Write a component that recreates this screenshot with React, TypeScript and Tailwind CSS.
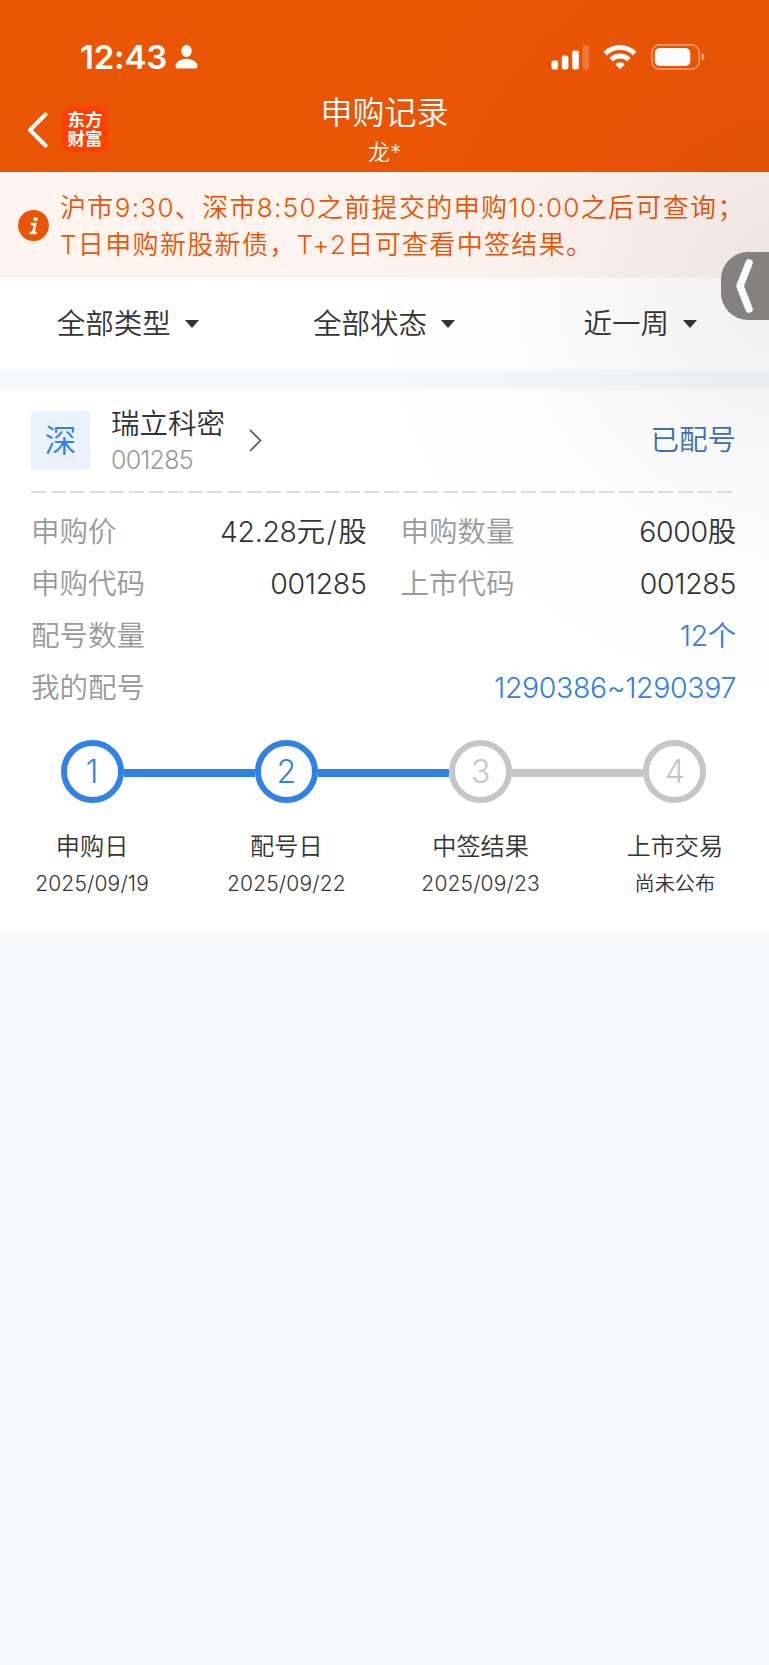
import type { ReactNode } from "react";
import clsx from "clsx";

const StatusBar = () => (
  <div className="flex h-[88px] items-center pt-[26px] pl-[80px] pr-[64px] text-white">
    <span className="text-[33px] font-semibold leading-none tracking-[-0.2px]">12:43</span>
    <svg className="ml-[8px]" width="23" height="24" viewBox="0 0 23 24" fill="currentColor">
      <ellipse cx="11.5" cy="6" rx="5.3" ry="5.9" />
      <path d="M0.5 21C0.5 17.5 5 13.7 11.5 13.7S22.5 17.5 22.5 21C22.5 22.8 21.8 23.5 20 23.5H3C1.2 23.5 0.5 22.8 0.5 21Z" />
    </svg>
    <svg className="ml-auto" width="39" height="25" viewBox="0 0 39 25" fill="currentColor">
      <rect x="0.5" y="15.5" width="6.6" height="9" rx="2" />
      <rect x="10.8" y="10.5" width="6.6" height="14" rx="2" />
      <rect x="21.2" y="5.5" width="6.6" height="19" rx="2" />
      <rect x="31.6" y="0.5" width="6.6" height="24" rx="2" opacity="0.22" />
    </svg>
    <svg className="ml-[13px]" width="34" height="25" viewBox="0 0 34 25" fill="none" stroke="currentColor">
      <path d="M2.2 8.6A21.2 21.2 0 0 1 31.8 8.6" strokeWidth="5" />
      <path d="M8 14.6A13 13 0 0 1 26 14.6" strokeWidth="4.8" />
      <path d="M12.2 19.2A7 7 0 0 1 21.8 19.2L17 24.3Z" fill="currentColor" stroke="none" />
    </svg>
    <svg className="ml-[14px]" width="54" height="26" viewBox="0 0 54 26" fill="none">
      <rect x="0.9" y="0.9" width="47.2" height="24.2" rx="7.5" stroke="white" strokeOpacity="0.42" strokeWidth="1.6" />
      <rect x="3.8" y="4" width="35.5" height="18" rx="5" fill="white" />
      <path d="M50.5 9C52.3 9.7 53.3 11.2 53.3 13S52.3 16.3 50.5 17Z" fill="white" fillOpacity="0.5" />
    </svg>
  </div>
);

const Header = () => (
  <header className="h-[172px] bg-[#ea5504]">
    <StatusBar />
    <div className="grid grid-cols-[1fr_auto_1fr] items-start text-white">
      <div className="flex items-center pl-[27px] pt-[18px]">
        <svg className="mt-[2px]" width="21" height="36" viewBox="0 0 21 36" fill="none" stroke="currentColor" strokeWidth="4">
          <path d="M18.5 2.5L3 18L18.5 33.5" strokeLinecap="round" strokeLinejoin="round" />
        </svg>
        <div className="ml-[14px] flex h-[46px] w-[46px] flex-col items-center justify-center rounded-[10px] bg-[#ff4002] text-[17.5px] font-bold leading-[19px]">
          <span>东方</span>
          <span>财富</span>
        </div>
      </div>
      <div className="flex flex-col items-center font-[350]">
        <h1 className="mt-[5px] text-[32px] leading-[40px]">申购记录</h1>
        <p className="mt-[4px] text-[22px] leading-[30px]">龙*</p>
      </div>
    </div>
  </header>
);

const Notice = () => (
  <div className="flex h-[106px] bg-[#fdf3ef] pl-[18px] text-[#ea5504]">
    <svg className="mt-[38px] shrink-0" width="31" height="31" viewBox="0 0 31 31">
      <circle cx="15.5" cy="15.5" r="15.4" fill="#ea5504" />
      <circle cx="17.6" cy="9.2" r="2.1" fill="white" />
      <path d="M12.8 14H17.2L15.4 22.6M11.6 22.9H18.6" fill="none" stroke="white" strokeWidth="2.5" />
    </svg>
    <p className="mt-[17px] ml-[11px] whitespace-nowrap text-[26px] font-[350] leading-[37px] tracking-[1.34px]">
      沪市9:30、深市8:50之前提交的申购10:00之后可查询；
      <br />
      T日申购新股新债，T+2日可查看中签结果。
    </p>
  </div>
);

const Filters = () => (
  <div className="grid h-[92px] grid-cols-3 bg-white">
    {["全部类型", "全部状态", "近一周"].map((label) => (
      <button key={label} className="flex items-center justify-center gap-[14px] pr-[1px] text-[28.5px] font-[350] text-[#333]">
        {label}
        <svg width="14" height="8" viewBox="0 0 14 8" fill="currentColor">
          <path d="M0 0H14L7 8Z" />
        </svg>
      </button>
    ))}
  </div>
);

const Field = ({ label, children, link }: { label: string; children: ReactNode; link?: boolean }) => (
  <div className="flex h-[52px] items-center justify-between text-[28.5px]">
    <span className="text-[#999]">{label}</span>
    <span className={clsx("tracking-[-0.35px]", link ? "text-[#2f80e8]" : "text-[#333]")}>{children}</span>
  </div>
);

const steps = [
  { name: "申购日", date: "2025/09/19", done: true },
  { name: "配号日", date: "2025/09/22", done: true },
  { name: "中签结果", date: "2025/09/23", done: false },
  { name: "上市交易", date: "尚未公布", done: false },
];

const lineColor = (index: number) => {
  if (index < 0 || index >= steps.length - 1) return "bg-transparent";
  return steps[index].done ? "bg-[#3282e6]" : "bg-[#c6c6c6]";
};

const Steps = () => (
  <div className="-mx-[36px] mt-[26px] grid grid-cols-4 font-[350] text-[#333]">
    {steps.map((step, i) => (
      <div key={step.name} className="flex flex-col items-center">
        <div className="flex w-full items-center">
          <div className={clsx("mt-[2px] h-[8px] flex-1", lineColor(i - 1))} />
          <div
            className={clsx(
              "flex h-[63px] w-[63px] items-center justify-center rounded-full border-[6px] text-[32px] font-light",
              step.done ? "border-[#3282e6] text-[#3282e6]" : "border-[#c6c6c6] text-[#c6c6c6]"
            )}
          >
            {i + 1}
          </div>
          <div className={clsx("mt-[2px] h-[8px] flex-1", lineColor(i))} />
        </div>
        <div className="mt-[26px] text-[24.2px] leading-[36px]">{step.name}</div>
        <div
          className={clsx(
            "mt-[4px] leading-[30px]",
            step.date.includes("/") ? "text-[21px] tracking-[0.15px]" : "text-[20.2px]"
          )}
        >
          {step.date}
        </div>
      </div>
    ))}
  </div>
);

const RecordCard = () => (
  <section className="mt-[20px] h-[541px] overflow-hidden bg-white pl-[31px] pr-[33px] pt-[15px]">
    <div className="flex h-[71px] items-center font-[350]">
      <div className="flex h-[59px] w-[59px] items-center justify-center rounded-[4px] bg-[#eaf2fd] text-[32px] text-[#2f80e8]">
        深
      </div>
      <div className="ml-[21px] pt-[2px]">
        <div className="text-[28.5px] leading-[38px] text-[#333]">瑞立科密</div>
        <div className="text-[25px] leading-[35px] tracking-[-0.7px] text-[#999]">001285</div>
      </div>
      <svg className="ml-[24px]" width="13" height="23" viewBox="0 0 13 23" fill="none" stroke="#555" strokeWidth="1.6">
        <path d="M1 1L11.5 11.5L1 22" />
      </svg>
      <span className="ml-auto text-[28.5px] text-[#3f71b8]">已配号</span>
    </div>
    <div className="mt-[15px] h-[2px] w-[701px] bg-[repeating-linear-gradient(90deg,#dfdfdf_0,#dfdfdf_15px,transparent_15px,transparent_19.6px)]" />
    <div className="mt-[13px] font-[350]">
      <div className="grid grid-cols-2 gap-x-[34px]">
        <Field label="申购价">
          42.28元<span className="mx-[2px]">/</span>股
        </Field>
        <Field label="申购数量">6000股</Field>
        <Field label="申购代码">001285</Field>
        <Field label="上市代码">001285</Field>
      </div>
      <Field label="配号数量" link>12个</Field>
      <Field label="我的配号" link>1290386~1290397</Field>
    </div>
    <Steps />
  </section>
);

// Half-hidden handle on the right edge, with the soft shade it casts
const SideHandle = () => (
  <>
    <div className="pointer-events-none absolute inset-x-0 top-0 h-[760px] bg-[radial-gradient(circle_at_790px_286px,rgba(0,0,0,0.062)_0,rgba(0,0,0,0.042)_100px,rgba(0,0,0,0.018)_220px,rgba(0,0,0,0.007)_320px,transparent_430px)]" />
    <button className="absolute right-0 top-[252px] flex h-[68px] w-[48px] items-center rounded-l-[27px] bg-[#838281] pl-[14px]">
      <svg width="20" height="56" viewBox="0 0 20 56" fill="none" stroke="white" strokeWidth="7.5">
        <path d="M14 5L5 28L14 51" strokeLinecap="round" strokeLinejoin="round" />
      </svg>
    </button>
  </>
);

export default function App() {
  return (
    <div className="relative h-[1665px] w-[769px] overflow-hidden bg-[#f6f8fa] font-['Inter','Noto_Sans_CJK_SC',sans-serif]">
      <Header />
      <Notice />
      <Filters />
      <RecordCard />
      <SideHandle />
    </div>
  );
}
